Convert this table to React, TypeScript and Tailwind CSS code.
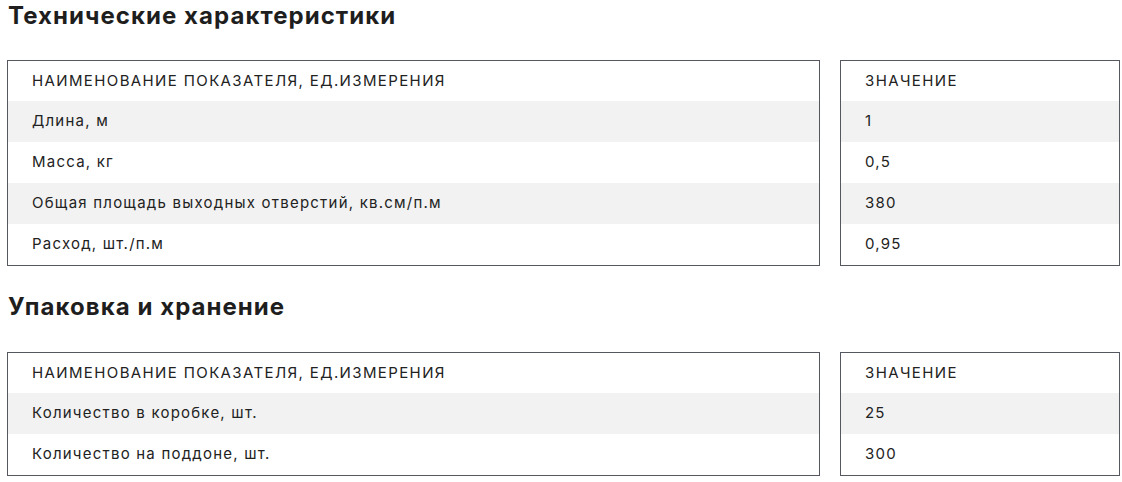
const specs = [
  ['Длина, м', '1'],
  ['Масса, кг', '0,5'],
  ['Общая площадь выходных отверстий, кв.см/п.м', '380'],
  ['Расход, шт./п.м', '0,95'],
];

const storage = [
  ['Количество в коробке, шт.', '25'],
  ['Количество на поддоне, шт.', '300'],
];

function SpecTable({ rows }: { rows: string[][] }) {
  return (
    <div className="flex gap-5">
      <div className="w-[813px] border border-[#55585e]">
        <div className="h-[40px] flex items-center px-6 uppercase tracking-[1.38px]">Наименование показателя, ед.измерения</div>
        {rows.map(([name], i) => (
          <div key={i} className={`h-[41px] flex items-center px-6 ${i % 2 === 0 ? 'bg-[#f2f2f2]' : ''}`}>
            {name}
          </div>
        ))}
      </div>
      <div className="w-[280px] border border-[#55585e]">
        <div className="h-[40px] flex items-center px-6 uppercase tracking-[1.38px]">Значение</div>
        {rows.map(([, value], i) => (
          <div key={i} className={`h-[41px] flex items-center px-6 ${i % 2 === 0 ? 'bg-[#f2f2f2]' : ''}`}>
            {value}
          </div>
        ))}
      </div>
    </div>
  );
}

export default function App() {
  return (
    <div className="bg-white min-h-screen pl-[7px] pt-0 text-[15px] tracking-[1.22px] text-[#222222]" style={{ fontFamily: 'Inter, "Noto Sans", sans-serif' }}>
      <h2 className="text-[24px] font-bold leading-[32px] tracking-[1.05px] text-[#1e1e1e] pl-px">Технические характеристики</h2>
      <div className="mt-[28px]">
        <SpecTable rows={specs} />
      </div>
      <h2 className="mt-[25px] text-[24px] font-bold leading-[32px] tracking-[1.05px] text-[#1e1e1e] pl-px">Упаковка и хранение</h2>
      <div className="mt-[29px]">
        <SpecTable rows={storage} />
      </div>
    </div>
  );
}
